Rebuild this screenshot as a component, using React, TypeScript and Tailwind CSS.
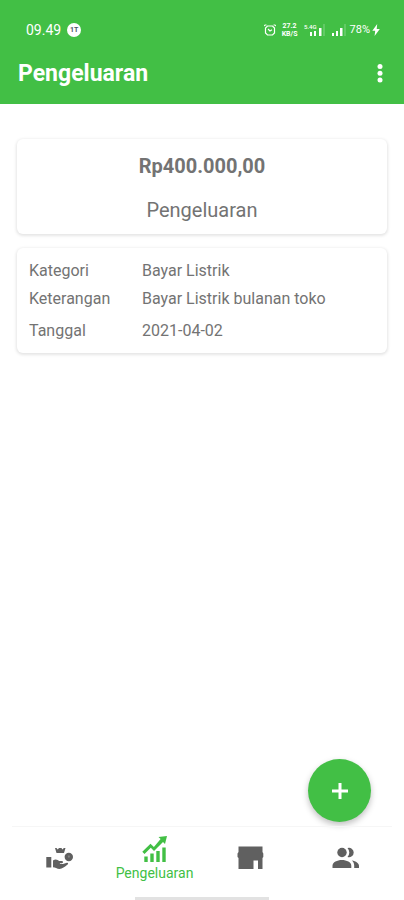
import {type FC, type ReactNode} from "react";

type DetailRow = {
    label: string;
    value: string;
    className: string;
};

type NavItem = {
    label: string;
    icon: ReactNode;
    active?: boolean;
};

const details: DetailRow[] = [
    {label: "Kategori", value: "Bayar Listrik", className: "h-7"},
    {label: "Keterangan", value: "Bayar Listrik bulanan toko", className: "h-7"},
    {label: "Tanggal", value: "2021-04-02", className: "h-9"},
];

/* icons */
const AlarmIcon: FC = () => (
    <svg viewBox="0 0 12 12" className="w-3 h-3" fill="none" stroke="currentColor" aria-hidden="true">
        <path d="M3.500 2h5L10.500 4v5L8.500 11h-5L1.500 9V4z" strokeWidth="1.2"/>
        <path d="M.6 2.200V1H2.500M11.400 2.200V1H9.500" strokeWidth="1"/>
        <path d="m4 5 2 2 2-1.200" strokeWidth="1.1"/>
    </svg>
);

const SignalIcon: FC = () => (
    <svg viewBox="0 0 14 12" className="w-[14px] h-3" fill="currentColor" aria-hidden="true">
        <path d="M0 9h2v3H0zM4 7h2v5H4zM8 4h2.500v8H8z"/>
        <path d="M12.500 0h1v12h-1z" opacity=".35"/>
    </svg>
);

const DataSignalIcon: FC = () => (
    <svg viewBox="0 0 21 12" className="w-[21px] h-3" fill="currentColor" aria-hidden="true">
        <text x="0" y="5" fontSize="6" fontWeight="500">5.4G</text>
        <path d="M6 8h2v4H6zM10 7h2v5h-2zM15 4h2.500v8H15z"/>
        <path d="M19.500 0h1v12h-1z" opacity=".35"/>
    </svg>
);

const BoltIcon: FC = () => (
    <svg viewBox="0 0 8 12" className="w-2 h-3" fill="currentColor" aria-hidden="true">
        <path d="M5.200 0 .3 6.800h2.900L2.600 12 7.800 5H4.700z"/>
    </svg>
);

const IncomeIcon: FC = () => (
    <svg viewBox="0 0 28 24" className="w-7 h-6" fill="currentColor" aria-hidden="true">
        <path d="M9 2h1.500l1.200 1.600L13 2h2.400l1.200 1.600L17.800 2H19.500l-1.500 5h-7.500z"/>
        <circle cx="22.800" cy="11" r="4.200"/>
        <path d="m21.700 9.700 1.700-.4.600 2-1.700.5z" fill="#858585"/>
        <path d="M.3 11h5v10.500h-5zM7 14.500c2.500-2 4.700-.8 6.200.4h2.500c1.700 0 1.900 2 .2 2.300h-2v.8h3l4-1.300c1.400-.2 1.600 1 .7 1.700-2.900 2.500-5.300 4.300-8.100 4.500-2.500-.2-4.300-1.500-6.500-1.700z"/>
    </svg>
);

const GrowthIcon: FC = () => (
    <svg viewBox="0 0 26 28" className="w-[26px] h-7" fill="currentColor" aria-hidden="true">
        <path d="M2.300 21.500h3.400V27H2.300zM8.300 18.500h3.400V27H8.300zM14.300 16h3.400v11h-3.400zM20.300 12.500h3.400V27h-3.400z"/>
        <path d="m16.500 2 8.500-1-2 8-2-2-9 9-3.200-3.200L2.500 19 .3 16.800l8.200-8L11.900 12 18.600 4z"/>
    </svg>
);

const StoreIcon: FC = () => (
    <svg viewBox="0 0 28 24" className="w-7 h-6" fill="currentColor" aria-hidden="true">
        <path d="M2.500.5h24V6l.8 1.500V11L26.500 12v11H22v-8.500h-4.500V23h-15V12l-1-1V7.500l1-1.500z"/>
    </svg>
);

const PeopleIcon: FC = () => (
    <svg viewBox="0 0 28 24" className="w-7 h-6" fill="currentColor" aria-hidden="true">
        <circle cx="11" cy="6.500" r="4.700"/>
        <path d="M16.500 2.100a4.700 4.700 0 1 1 0 8.900 7 7 0 0 0 0-8.900z"/>
        <path d="M1.500 22v-2.300c0-3.400 4.700-5.600 9.400-5.600s9.400 2.200 9.400 5.600V22z"/>
        <path d="M20.800 14.400c4.300.7 7.200 2.700 7.200 5.300V22h-4.800v-2.300c0-2.200-.8-3.900-2.400-5.300z"/>
    </svg>
);

const navItems: NavItem[] = [
    {label: "Pemasukan", icon: <IncomeIcon/>},
    {label: "Pengeluaran", icon: <GrowthIcon/>, active: true},
    {label: "Toko", icon: <StoreIcon/>},
    {label: "Pelanggan", icon: <PeopleIcon/>},
];

const StatusBar: FC = () => (
    <div className="flex items-center justify-between pl-[26px] pr-6 pt-5 text-white">
        <div className="flex items-center gap-1.5 h-5">
            <span className="text-sm leading-5">09.49</span>
            <span className="flex items-center justify-center w-[14px] h-[14px] rounded-full bg-white text-[7px] leading-none font-bold text-gray-600">
                1T
            </span>
        </div>
        <div className="flex items-center h-5">
            <AlarmIcon/>
            <span className="flex flex-col items-center w-4 mx-1.5 text-[7px] leading-[8px] font-bold">
                <span>27.2</span>
                <span>KB/S</span>
            </span>
            <DataSignalIcon/>
            <span className="ml-[7px] mr-1"><SignalIcon/></span>
            <span className="mr-0.5 text-[11px] leading-5">78%</span>
            <BoltIcon/>
        </div>
    </div>
);

const App: FC = () => (
    <div className="flex flex-col min-h-screen bg-white text-[#737373] font-[Roboto,sans-serif]">
        {/* header */}
        <header className="bg-[#42bf45] text-white">
            <StatusBar/>
            <div className="flex items-center justify-between h-16 pl-[18px] pr-3 pt-1">
                <h1 className="text-[23px] leading-8 font-bold">Pengeluaran</h1>
                <button type="button" aria-label="Menu" className="flex items-center justify-center w-6 h-8">
                    <svg viewBox="0 0 6 20" className="w-1.5 h-5" fill="currentColor" aria-hidden="true">
                        <circle cx="3" cy="2.500" r="2.500"/>
                        <circle cx="3" cy="9.300" r="2.500"/>
                        <circle cx="3" cy="16.100" r="2.500"/>
                    </svg>
                </button>
            </div>
        </header>

        {/* content */}
        <main className="flex flex-col flex-1 gap-[14px] px-[17px] pt-[35px]">
            <section className="flex flex-col items-center gap-4 rounded-md pt-[13px] pb-2.5 shadow-[0_1px_3px_1px_rgba(0,0,0,0.1)]">
                <p className="text-xl leading-7 font-bold">Rp400.000,00</p>
                <p className="text-xl leading-7">Pengeluaran</p>
            </section>

            <dl className="rounded-md px-3 pt-[9px] pb-1 shadow-[0_1px_3px_1px_rgba(0,0,0,0.1)]">
                {details.map((row) => (
                    <div key={row.label} className={`flex items-center text-base leading-5 ${row.className}`}>
                        <dt className="w-[113px] shrink-0">{row.label}</dt>
                        <dd>{row.value}</dd>
                    </div>
                ))}
            </dl>

            <button
                type="button"
                aria-label="Tambah pengeluaran"
                className="flex items-center justify-center w-[63px] h-[63px] mt-auto mb-1 mr-4 self-end rounded-full bg-[#42bf45] text-white shadow-[0_3px_6px_rgba(0,0,0,0.25)]"
            >
                <svg viewBox="0 0 16 16" className="w-4 h-4" fill="none" stroke="currentColor" strokeWidth="3" aria-hidden="true">
                    <path d="M8 0v16M0 8h16"/>
                </svg>
            </button>
        </main>

        {/* bottom navigation */}
        <footer className="px-3">
            <nav className="flex h-[71px] border-t border-[#f6f6f6]">
                {navItems.map((item) => (
                    <a
                        key={item.label}
                        href="#"
                        aria-label={item.label}
                        aria-current={item.active ? "page" : undefined}
                        className={`flex flex-1 flex-col items-center ${item.active ? "pt-2 text-[#42bf45]" : "pt-[19px] text-[#606060]"}`}
                    >
                        {item.icon}
                        {item.active && <span className="text-sm leading-5">{item.label}</span>}
                    </a>
                ))}
            </nav>
            <div className="w-[134px] h-[3px] mx-auto bg-[#e2e2e2]"/>
        </footer>
    </div>
);

export default App;
